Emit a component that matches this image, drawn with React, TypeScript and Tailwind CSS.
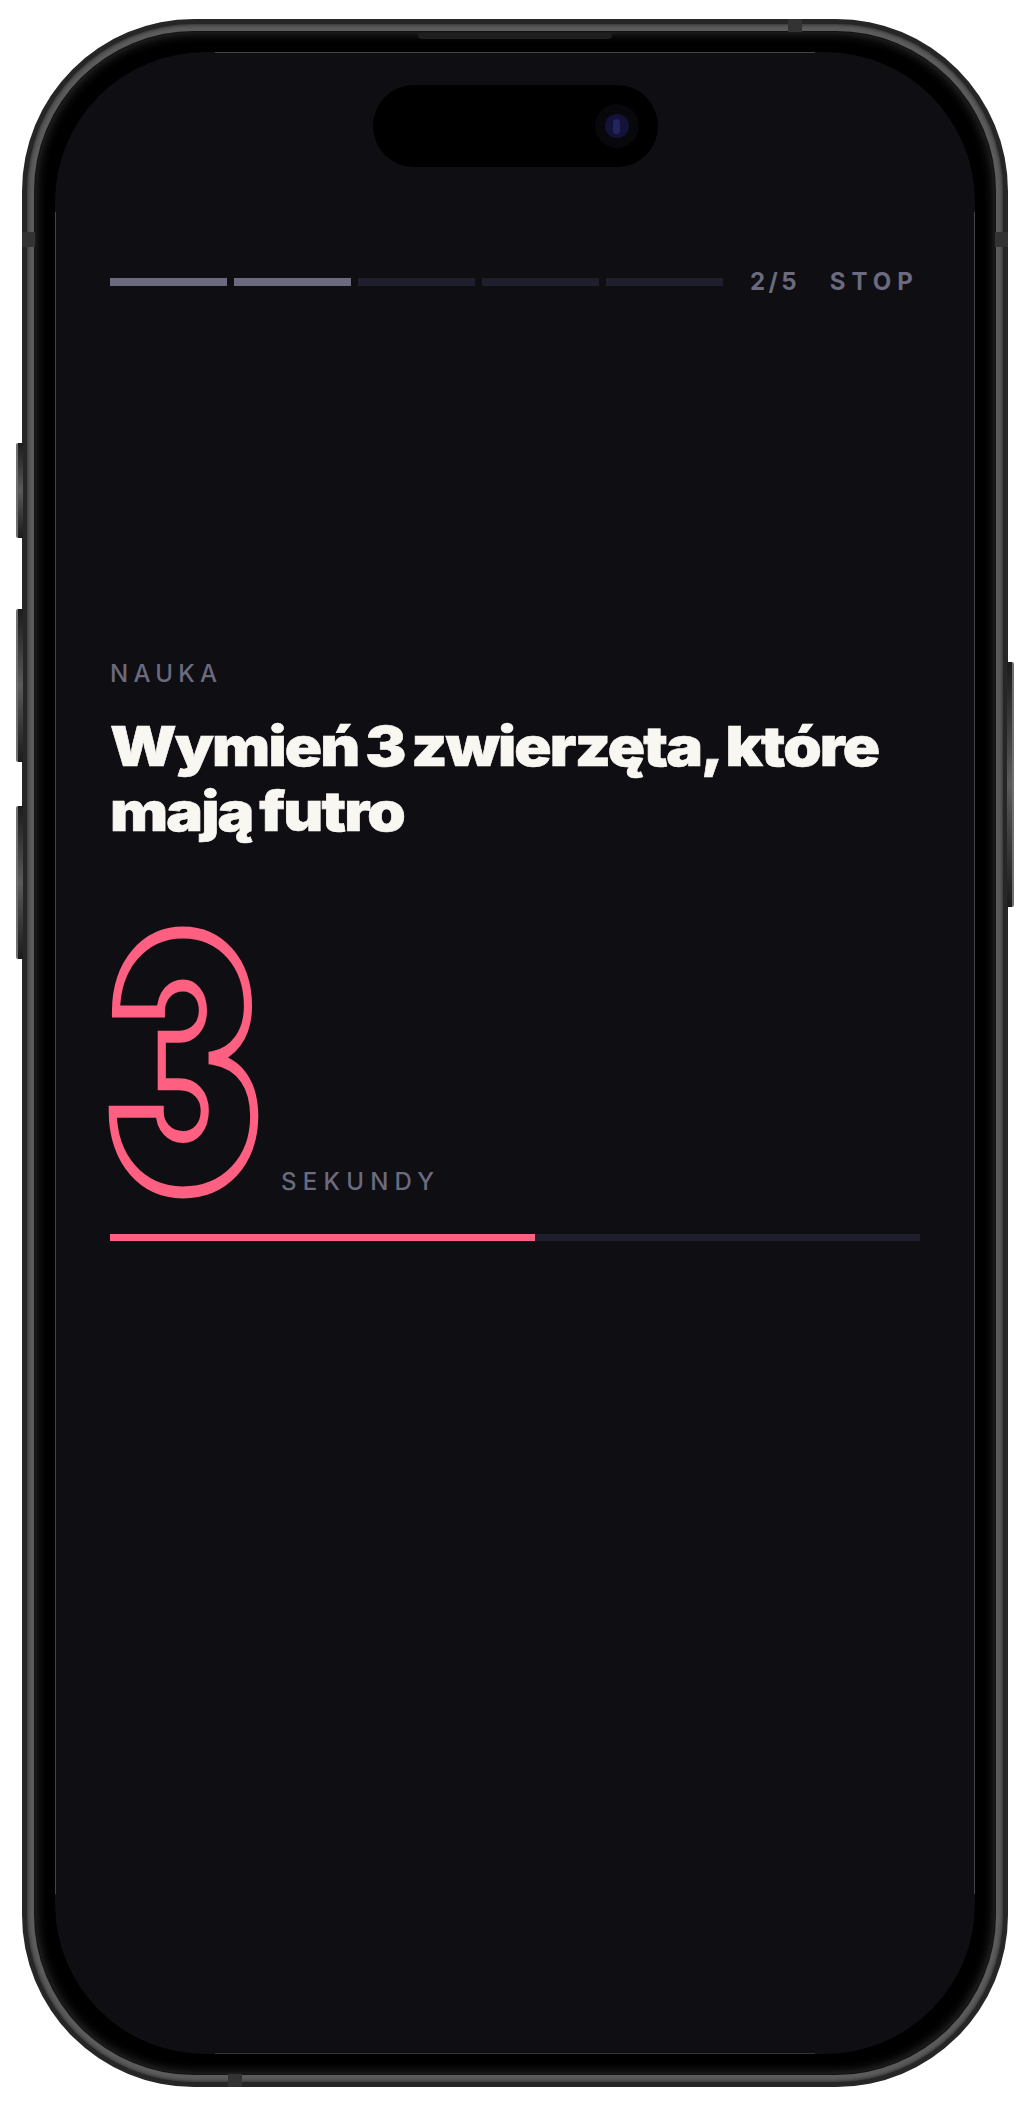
const segments = [true, true, false, false, false];

const SideButton = ({ className }: { className: string }) => {
  return <div className={`absolute w-[7px] bg-gradient-to-b from-[#1c1c1c] via-[#5a5a5a] to-[#1c1c1c] ${className}`} />;
};

const PhoneFrame = ({ children }: { children: React.ReactNode }) => {
  return (
    <div className="relative w-[986px] h-[2068px]">
      {/* Side buttons */}
      <SideButton className="left-[-6px] top-[424px] h-[95px] rounded-l-[2px] border-l-[2px] border-[#6f6f6f]" />
      <SideButton className="left-[-6px] top-[590px] h-[153px] rounded-l-[2px] border-l-[2px] border-[#6f6f6f]" />
      <SideButton className="left-[-6px] top-[787px] h-[153px] rounded-l-[2px] border-l-[2px] border-[#6f6f6f]" />
      <SideButton className="right-[-6px] top-[643px] h-[245px] rounded-r-[2px] border-r-[2px] border-[#6f6f6f]" />

      {/* Metal band */}
      <div className="w-full h-full rounded-[172px] bg-[#262626] p-[5px]">
        <div className="w-full h-full rounded-[167px] bg-[#5c5c5c] shadow-[inset_0_0_4px_#1a1a1a] p-[7px]">
          <div className="w-full h-full rounded-[160px] bg-[#141414] p-[1px]">
            <div className="w-full h-full rounded-[159px] bg-black shadow-[inset_0_0_12px_#3a3a3a] p-[20px]">
              {children}
            </div>
          </div>
        </div>
      </div>

      {/* Antenna bands and speaker */}
      <div className="absolute left-0 top-[213px] w-[13px] h-[15px] bg-[#333]" />
      <div className="absolute right-0 top-[213px] w-[13px] h-[15px] bg-[#333]" />
      <div className="absolute left-[766px] top-0 w-[14px] h-[13px] bg-[#333]" />
      <div className="absolute left-[206px] bottom-0 w-[14px] h-[13px] bg-[#333]" />
      <div className="absolute left-[396px] top-[14px] w-[194px] h-[6px] rounded-b-[4px] bg-[#1e1e1e]" />
    </div>
  );
};

export default function App() {
  return (
    <div className="w-[1030px] h-[2108px] bg-white pl-[22px] pt-[19px] overflow-hidden font-['Inter',sans-serif]">
      <PhoneFrame>
        <main className="relative w-full h-full rounded-[150px] bg-[#0e0e13] px-[55px] pt-[33px] flex flex-col">
          {/* Screen edge highlights */}
          <div className="absolute left-[160px] right-[160px] top-0 h-px bg-[#444]" />
          <div className="absolute left-[160px] right-[160px] bottom-0 h-px bg-[#333]" />
          <div className="absolute top-[160px] bottom-[160px] left-0 w-px bg-[#444]" />
          <div className="absolute top-[160px] bottom-[160px] right-0 w-px bg-[#444]" />

          {/* Dynamic island */}
          <div className="self-center w-[285px] h-[82px] shrink-0 rounded-full bg-black flex items-center justify-end pr-[19px]">
            <div className="w-[44px] h-[44px] rounded-full bg-[#08080c] flex items-center justify-center">
              <div className="w-[24px] h-[24px] rounded-full bg-[#13133a] flex items-center justify-center">
                <div className="w-[7px] h-[15px] rounded-full bg-[#24245e]" />
              </div>
            </div>
          </div>

          {/* Progress */}
          <div className="mt-[111px] flex items-center h-[8px]">
            <div className="flex gap-[6.5px] w-[613px]">
              {segments.map((done, index) => (
                <div
                  key={index}
                  className={done ? "flex-1 h-[8px] bg-[#6b6a7e]" : "flex-1 h-[8px] bg-[#1f1e2c]"}
                />
              ))}
            </div>
            <span className="ml-[27px] text-[24px] font-bold tracking-[0.14em] text-[#6b6a7e]">2/5</span>
            <span className="ml-[30px] text-[24px] font-bold tracking-[0.25em] text-[#6b6a7e]">STOP</span>
          </div>

          {/* Question */}
          <p className="mt-[375px] text-[24px] leading-[26px] font-medium tracking-[0.22em] text-[#6b6a7e]">NAUKA</p>
          <h1 className="mt-[27px] origin-left scale-x-[1.12] text-[55px] leading-[65px] font-black tracking-[-0.03em] [word-spacing:-0.06em] text-[#f8f7f2] [-webkit-text-stroke:0.6px_#f8f7f2]">
            Wymień 3 zwierzęta, które
            <br />
            mają futro
          </h1>

          {/* Countdown */}
          <div className="mt-[82px] flex items-end h-[273px]">
            <div className="w-[171px] h-[273px]">
              <span className="block -ml-[6px] origin-top-left scale-x-[0.68] font-black text-[348px] leading-[273px] text-transparent [-webkit-text-stroke:12px_#ff5f80]">
                3
              </span>
            </div>
            <span className="mb-[4px] text-[24px] leading-[26px] font-medium tracking-[0.26em] text-[#6b6a7e]">SEKUNDY</span>
          </div>
          <div className="mt-[35px] h-[7px] bg-[#1f1e2c]">
            <div className="h-full w-[425px] bg-[#ff5f80]" />
          </div>
        </main>
      </PhoneFrame>
    </div>
  );
}
